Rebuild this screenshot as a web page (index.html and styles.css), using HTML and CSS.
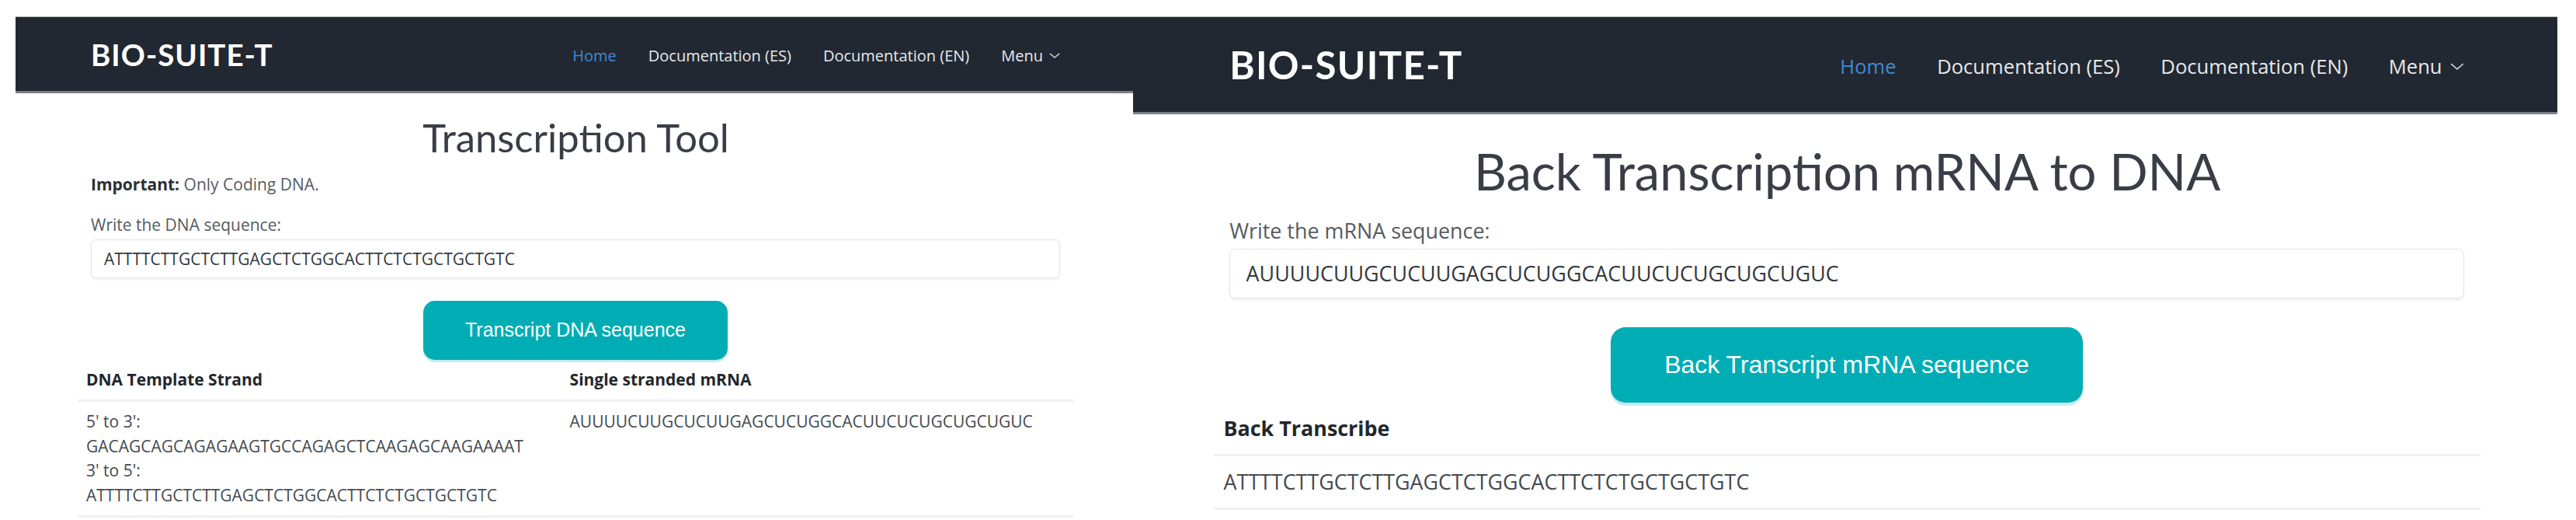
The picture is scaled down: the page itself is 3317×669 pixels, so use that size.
FILE: index.html
```html
<!DOCTYPE html>
<html lang="en">
<head>
<meta charset="utf-8">
<title>BIO-SUITE-T</title>
<link rel="stylesheet" href="styles.css">
</head>
<body>
<div class="screens">
  <section class="app app--transcription">
    <header class="navbar">
      <a class="brand" href="#">BIO-SUITE-T</a>
      <nav class="nav">
        <a class="nav-link active" href="#">Home</a>
        <a class="nav-link" href="#">Documentation (ES)</a>
        <a class="nav-link" href="#">Documentation (EN)</a>
        <a class="nav-link dropdown" href="#">Menu <svg class="chevron" viewBox="0 0 16 8"><polyline points="1,1 8,7 15,1"/></svg></a>
      </nav>
    </header>
    <main class="content">
      <h1 class="title">Transcription Tool</h1>
      <form class="seq-form">
        <p class="note"><strong>Important:</strong> Only Coding DNA.</p>
        <label class="label" for="dna">Write the DNA sequence:</label>
        <input class="seq-input" id="dna" type="text" value="ATTTTCTTGCTCTTGAGCTCTGGCACTTCTCTGCTGCTGTC">
        <div class="actions"><button class="btn" type="button">Transcript DNA sequence</button></div>
      </form>
      <table class="results">
        <thead>
          <tr><th class="col-main">DNA Template Strand</th><th>Single stranded mRNA</th></tr>
        </thead>
        <tbody>
          <tr>
            <td class="col-main">5' to 3':<br>GACAGCAGCAGAGAAGTGCCAGAGCTCAAGAGCAAGAAAAT<br>3' to 5':<br>ATTTTCTTGCTCTTGAGCTCTGGCACTTCTCTGCTGCTGTC</td>
            <td>AUUUUCUUGCUCUUGAGCUCUGGCACUUCUCUGCUGCUGUC</td>
          </tr>
        </tbody>
      </table>
    </main>
  </section>

  <section class="app app--back">
    <header class="navbar">
      <a class="brand" href="#">BIO-SUITE-T</a>
      <nav class="nav">
        <a class="nav-link active" href="#">Home</a>
        <a class="nav-link" href="#">Documentation (ES)</a>
        <a class="nav-link" href="#">Documentation (EN)</a>
        <a class="nav-link dropdown" href="#">Menu <svg class="chevron" viewBox="0 0 16 8"><polyline points="1,1 8,7 15,1"/></svg></a>
      </nav>
    </header>
    <main class="content">
      <h1 class="title">Back Transcription mRNA to DNA</h1>
      <form class="seq-form">
        <label class="label" for="mrna">Write the mRNA sequence:</label>
        <input class="seq-input" id="mrna" type="text" value="AUUUUCUUGCUCUUGAGCUCUGGCACUUCUCUGCUGCUGUC">
        <div class="actions"><button class="btn" type="button">Back Transcript mRNA sequence</button></div>
      </form>
      <table class="results">
        <thead>
          <tr><th>Back Transcribe</th></tr>
        </thead>
        <tbody>
          <tr><td>ATTTTCTTGCTCTTGAGCTCTGGCACTTCTCTGCTGCTGTC</td></tr>
        </tbody>
      </table>
    </main>
  </section>
</div>
</body>
</html>
```

FILE: styles.css
```css
* { box-sizing: border-box; }

html, body {
  margin: 0;
  background: #ffffff;
  overflow: hidden;
}

body {
  font-family: "Open Sans", "Liberation Sans", sans-serif;
  color: #212529;
}

.screens {
  display: flex;
  align-items: flex-start;
  padding: 21px 0 0 20px;
}

.app {
  --s: 1;
  flex: none;
  width: 1439px;
}

.app--back {
  --s: 1.28;
  width: 1834px;
}

/* Navbar */
.navbar {
  box-sizing: content-box;
  display: flex;
  align-items: center;
  justify-content: space-between;
  height: calc(95px * var(--s));
  padding: 0 calc(94px * var(--s)) 0 calc(97px * var(--s));
  background: #222831;
  border-top: 1px solid #b9bcc0;
  border-bottom: calc(3px * var(--s)) solid #7c8086;
}

.brand {
  font-family: Lato, "Liberation Sans", sans-serif;
  font-weight: 700;
  font-size: calc(38.5px * var(--s));
  letter-spacing: calc(1px * var(--s));
  color: #ffffff;
  text-decoration: none;
}

.nav {
  display: flex;
  align-items: center;
  gap: calc(41px * var(--s));
  padding-top: calc(4px * var(--s));
  font-size: calc(20px * var(--s));
}

.nav-link {
  color: #e6e8eb;
  text-decoration: none;
  display: flex;
  align-items: center;
}

.nav-link.active { color: #3d8bd4; }

.chevron {
  width: calc(14px * var(--s));
  height: calc(7px * var(--s));
  margin-left: calc(8px * var(--s));
  fill: none;
  stroke: #c9ccd0;
  stroke-width: 1.6;
}

/* Content */
.content {
  padding: 0 calc(77px * var(--s)) 0 calc(81px * var(--s));
}

.title {
  font-family: Lato, "Liberation Sans", sans-serif;
  font-weight: 400;
  font-size: calc(50.8px * var(--s));
  line-height: 1.2;
  text-align: center;
  color: #393e46;
  margin: calc(27px * var(--s)) 0 calc(14px * var(--s));
}

.seq-form {
  padding: 0 calc(17px * var(--s)) 0 calc(16px * var(--s));
}

.note {
  margin: 0 0 calc(21px * var(--s));
  font-size: calc(21px * var(--s));
  line-height: 1.5;
  color: #555b61;
}

.note strong {
  font-weight: 700;
  color: #2b2f33;
}

.label {
  display: block;
  margin-bottom: calc(2px * var(--s));
  font-size: calc(21px * var(--s));
  line-height: 1.5;
  color: #555b61;
}

.seq-input {
  display: block;
  width: 100%;
  height: calc(50px * var(--s));
  padding: 0 calc(16px * var(--s));
  border: 1px solid #e1e4e8;
  border-radius: calc(6px * var(--s));
  box-shadow: 0 calc(2px * var(--s)) calc(2px * var(--s)) rgba(0, 0, 0, 0.05);
  background: #ffffff;
  font-family: "Open Sans", "Liberation Sans", sans-serif;
  font-size: calc(21px * var(--s));
  color: #33383d;
}

.actions {
  display: flex;
  justify-content: center;
  margin-top: calc(29px * var(--s));
}

.btn {
  height: calc(76px * var(--s));
  padding: 0 calc(54px * var(--s));
  border: 0;
  border-radius: calc(15px * var(--s));
  background: #00adb5;
  box-shadow: 0 calc(3px * var(--s)) 0 #c4ebed;
  color: #ffffff;
  font-family: "Liberation Sans", Arial, sans-serif;
  font-size: calc(25px * var(--s));
}

/* Results table */
.results {
  width: 100%;
  border-collapse: collapse;
  font-size: calc(21px * var(--s));
  line-height: 1.5;
}

.results th,
.results td {
  padding: calc(10px * var(--s));
  text-align: left;
  vertical-align: top;
  border-bottom: calc(3px * var(--s)) solid #eef0f2;
}

.results th {
  font-weight: 700;
  color: #23272b;
}

.results td {
  color: #454a4f;
}

.results .col-main {
  width: 48.6%;
}
```
